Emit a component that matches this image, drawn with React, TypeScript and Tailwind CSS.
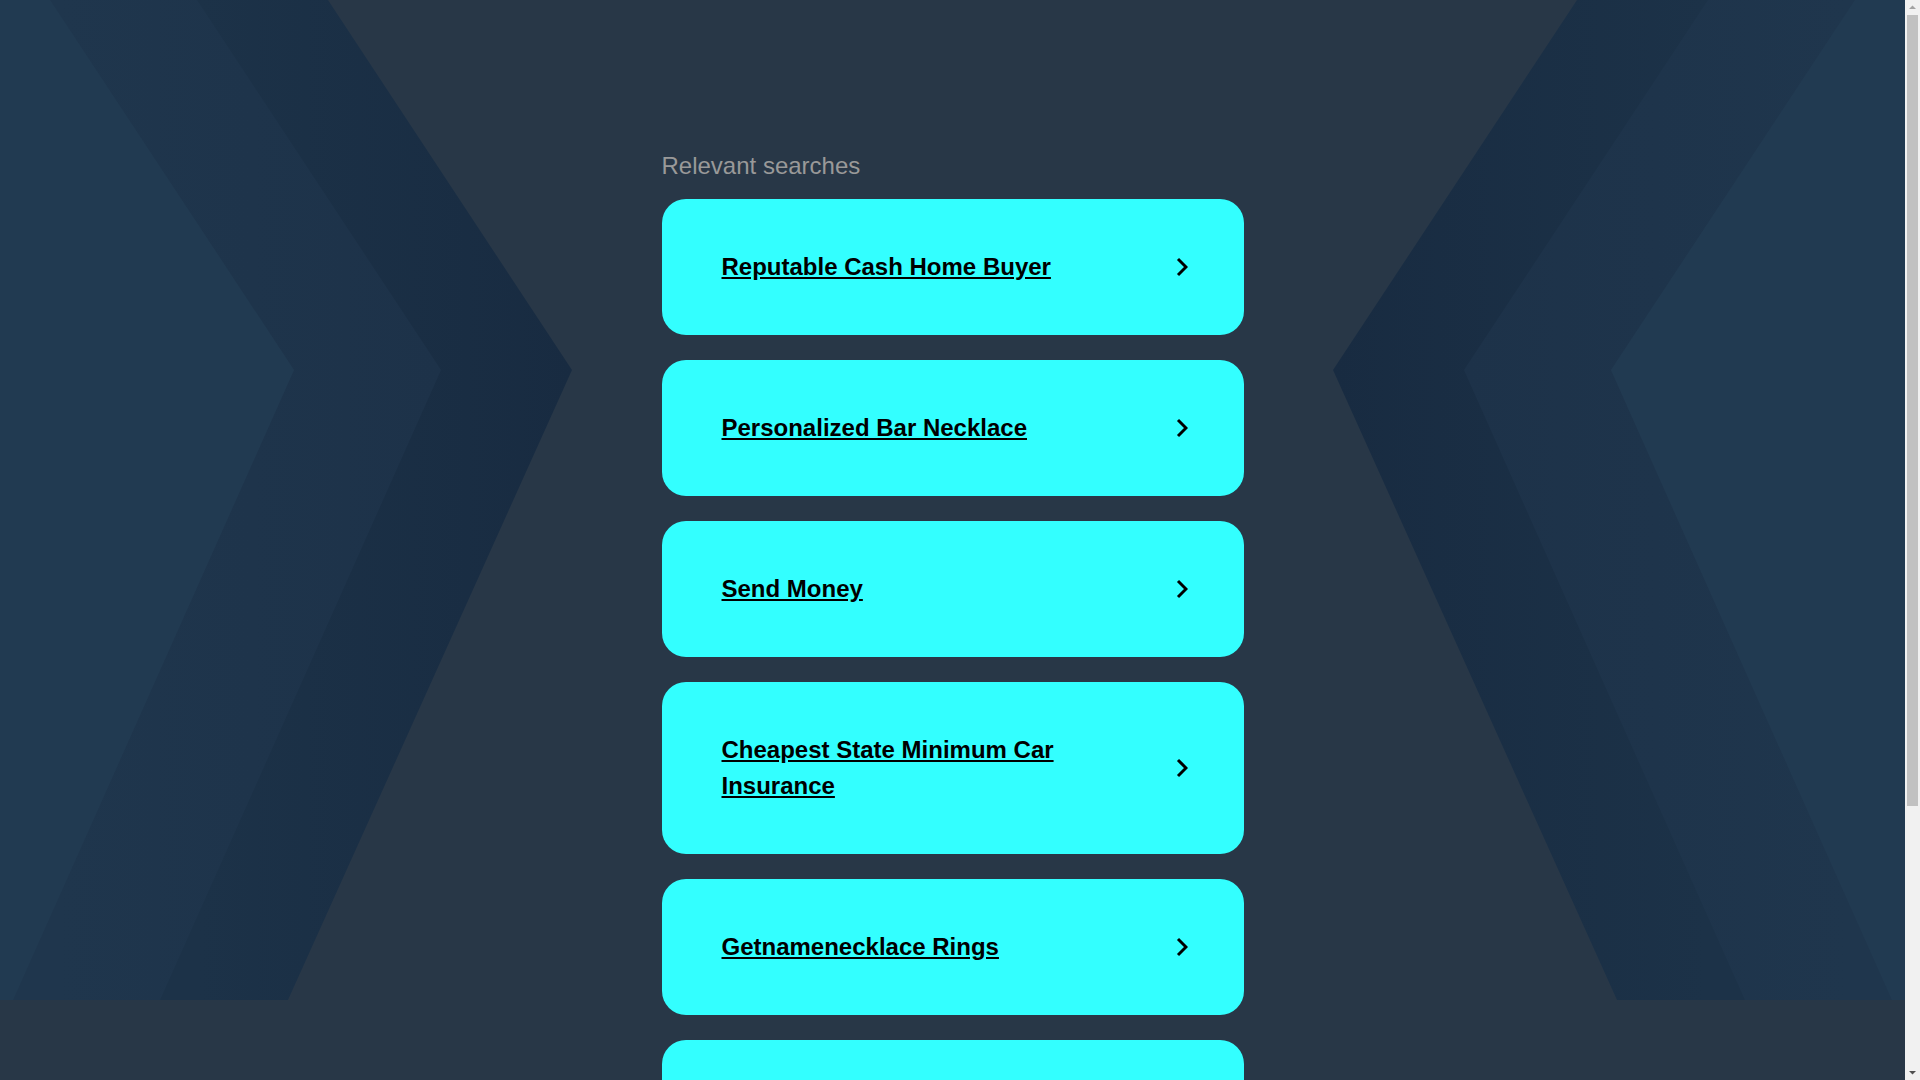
import React from 'react';

const searches = [
  'Reputable Cash Home Buyer',
  'Personalized Bar Necklace',
  'Send Money',
  'Cheapest State Minimum Car Insurance',
  'Getnamenecklace Rings',
  'Best Online Savings Account',
];

// decorative chevron bands, drawn for the left half and mirrored for the right
const Bands = () => (
  <g>
    <polygon points="0,0 328,0 572,370 288,1000 0,1000" fill="url(#gOuter)" />
    <polygon points="0,0 197,0 441,370 160,1000 0,1000" fill="url(#gMiddle)" />
    <polygon points="0,0 50,0 294,370 13,1000 0,1000" fill="url(#gInner)" />
  </g>
);

const Background = () => (
  <svg
    className="absolute top-0 left-0 w-full h-[1000px]"
    viewBox="0 0 1905 1000"
    preserveAspectRatio="none"
  >
    <defs>
      <linearGradient id="gOuter" gradientUnits="userSpaceOnUse" x1="200" y1="0" x2="572" y2="0">
        <stop offset="0" stopColor="#1c3248" />
        <stop offset="1" stopColor="#182b41" />
      </linearGradient>
      <linearGradient id="gMiddle" gradientUnits="userSpaceOnUse" x1="60" y1="0" x2="441" y2="0">
        <stop offset="0" stopColor="#1f364d" />
        <stop offset="1" stopColor="#1d3249" />
      </linearGradient>
      <linearGradient id="gInner" gradientUnits="userSpaceOnUse" x1="0" y1="0" x2="294" y2="0">
        <stop offset="0" stopColor="#213a51" />
        <stop offset="1" stopColor="#213a51" />
      </linearGradient>
    </defs>
    <Bands />
    <g transform="translate(1905,0) scale(-1,1)">
      <Bands />
    </g>
  </svg>
);

const Chevron = () => (
  <svg width="12" height="20" viewBox="0 0 12 20" className="shrink-0">
    <polyline points="2,2 10,10 2,18" fill="none" stroke="#000" strokeWidth="3" />
  </svg>
);

// classic page scrollbar seen at the right edge of the screenshot
const Scrollbar = () => (
  <div className="w-[15px] shrink-0 h-screen bg-[#f1f1f1] flex flex-col items-center">
    <svg width="15" height="15" viewBox="0 0 15 15" className="shrink-0">
      <polygon points="4,9 7.5,5.5 11,9" fill="#a3a3a3" />
    </svg>
    <div className="w-[11px] h-[791px] bg-[#c1c1c1]" />
    <div className="flex-1" />
    <svg width="15" height="15" viewBox="0 0 15 15" className="shrink-0">
      <polygon points="4,6 7.5,9.5 11,6" fill="#505050" />
    </svg>
  </div>
);

export default function App() {
  return (
    <div className="flex h-screen overflow-hidden bg-[#283747] font-['Liberation_Sans',Arial,sans-serif]">
      <main className="relative flex-1 h-screen overflow-hidden">
        <Background />
        <div className="relative mx-auto w-[582px] pt-[148px] pb-[60px]">
          <h2 className="text-[24px] leading-[36px] text-[#999999] mb-[15px]">Relevant searches</h2>
          <div className="flex flex-col gap-[25px]">
            {searches.map((s) => (
              <a
                key={s}
                href="#"
                className="flex items-center justify-between rounded-[24px] bg-[#33ffff] pl-[60px] pr-[56px] py-[50px]"
              >
                <span className="max-w-[400px] text-[24px] leading-[36px] font-bold text-black underline">
                  {s}
                </span>
                <Chevron />
              </a>
            ))}
          </div>
        </div>
      </main>
      <Scrollbar />
    </div>
  );
}
